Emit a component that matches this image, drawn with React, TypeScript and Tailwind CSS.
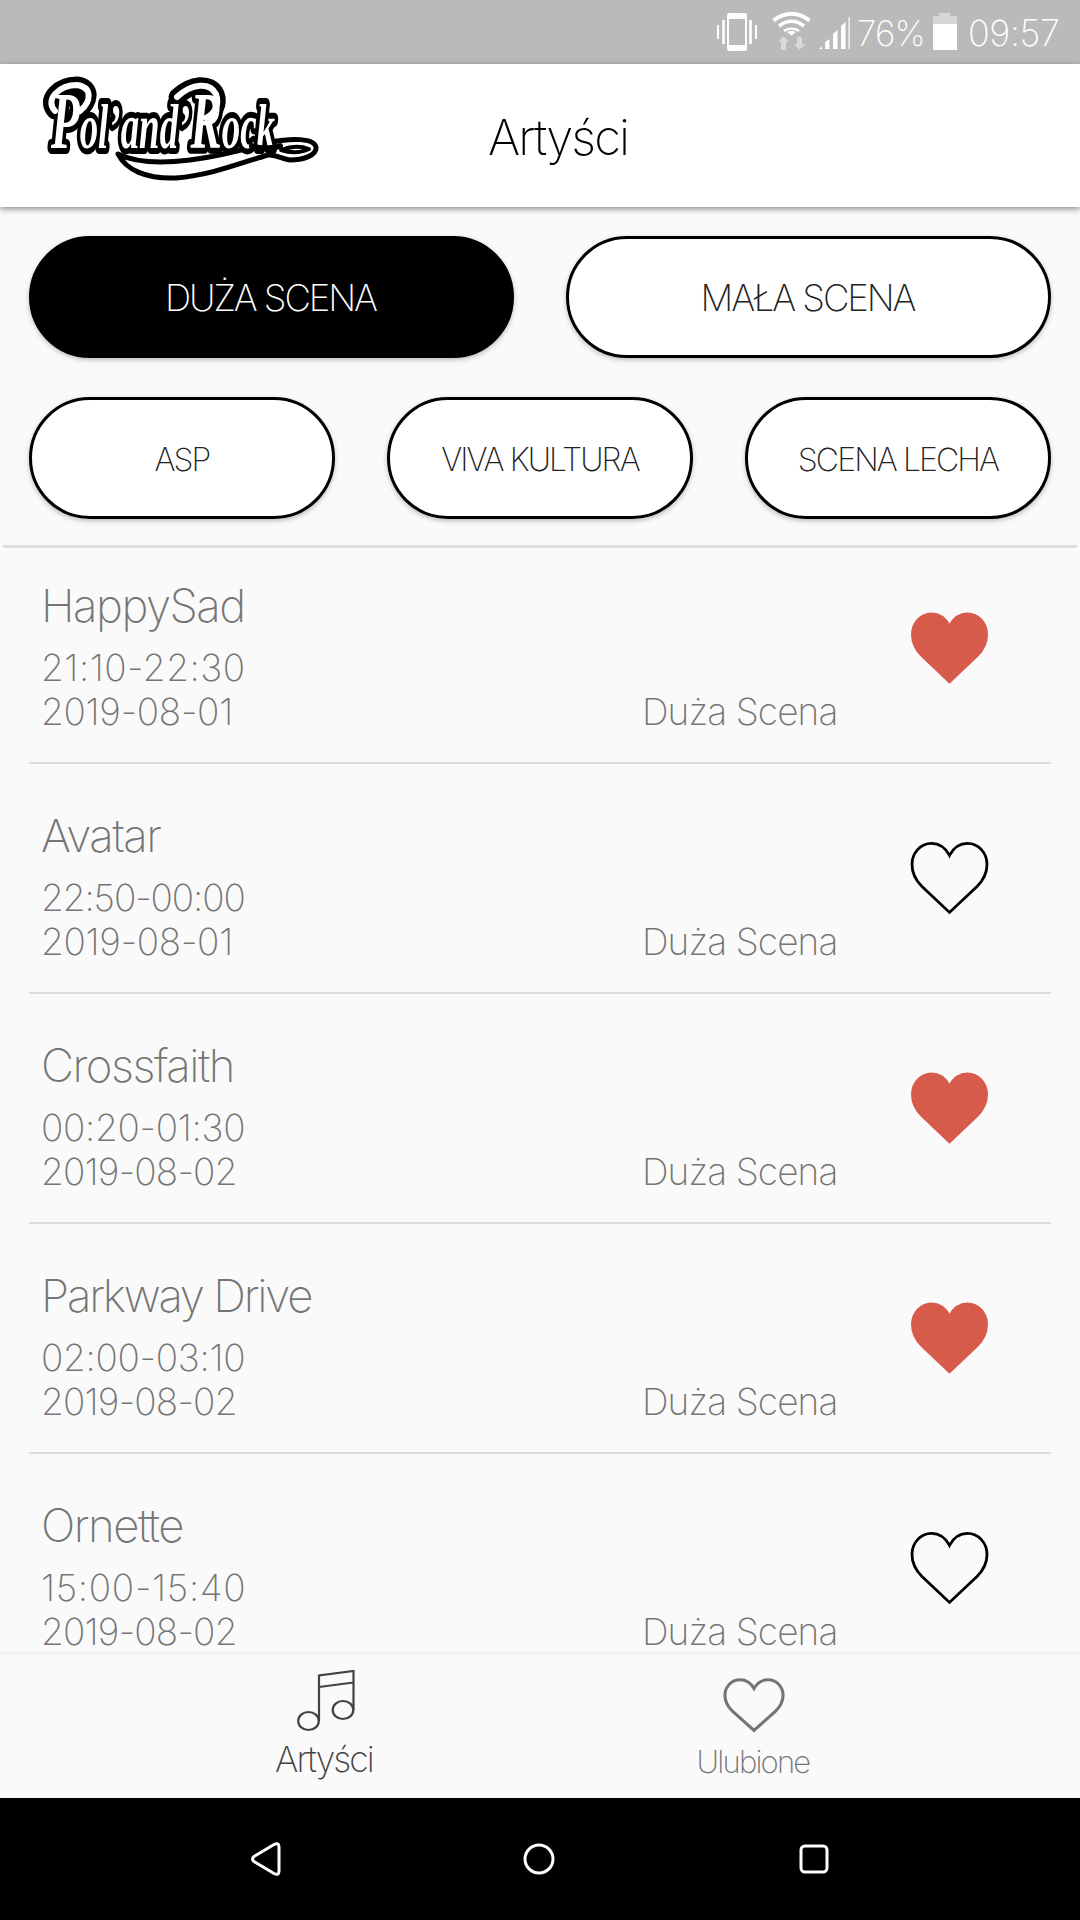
import React, { useState } from 'react';

interface Artist {
  id: number;
  name: string;
  hours: string;
  date: string;
  stage: string;
  favourite: boolean;
  // digits are proportional, so each time gets its own spacing to keep the column even
  hoursTracking: string;
  dateTracking: string;
}

const initialArtists: Artist[] = [
  { id: 1, name: 'HappySad', hours: '21:10-22:30', date: '2019-08-01', stage: 'Duża Scena', favourite: true, hoursTracking: 'tracking-[0.5px]', dateTracking: 'tracking-[-0.3px]' },
  { id: 2, name: 'Avatar', hours: '22:50-00:00', date: '2019-08-01', stage: 'Duża Scena', favourite: false, hoursTracking: 'tracking-[-1.1px]', dateTracking: 'tracking-[-0.3px]' },
  { id: 3, name: 'Crossfaith', hours: '00:20-01:30', date: '2019-08-02', stage: 'Duża Scena', favourite: true, hoursTracking: 'tracking-[-0.3px]', dateTracking: 'tracking-[-0.8px]' },
  { id: 4, name: 'Parkway Drive', hours: '02:00-03:10', date: '2019-08-02', stage: 'Duża Scena', favourite: true, hoursTracking: 'tracking-[-0.3px]', dateTracking: 'tracking-[-0.8px]' },
  { id: 5, name: 'Ornette', hours: '15:00-15:40', date: '2019-08-02', stage: 'Duża Scena', favourite: false, hoursTracking: 'tracking-[0.7px]', dateTracking: 'tracking-[-0.8px]' }
];

const HEART =
  'M38.5 13 C34.5 5.5 28.5 1 20.5 1 C9.5 1 1 10.5 1 22 C1 31.5 5 38 11 44 L38.5 70 L66 44 C72 38 76 31.5 76 22 C76 10.5 67.500 1 56.5 1 C48.5 1 42.5 5.5 38.5 13 Z';

const StatusBar: React.FC = () => (
  <div className="flex h-16 shrink-0 items-center bg-[#bababa] pl-[717px] text-white">
    <svg width="216" height="64" viewBox="717 0 216 64" className="-mr-[76px] shrink-0" fill="none">
      <g stroke="#fff">
        <path d="M718 25v14M756 25v14" strokeWidth="2" />
        <path d="M723.5 20v24M750.5 20v24" strokeWidth="2.6" />
      </g>
      <path
        fill="#fff"
        fillRule="evenodd"
        d="M730 13h14q3 0 3 3v32q0 3-3 3h-14q-3 0-3-3v-32q0-3 3-3ZM729 19v26h16v-26Z"
      />
      <path d="M773.5 20.5q18-13.500 36 0" stroke="#fff" strokeWidth="4" />
      <path d="M779 26q12.500-9.500 25 0" stroke="#fff" strokeWidth="3.5" />
      <path d="M784 31q7.500-5 15 0" stroke="#fff" strokeWidth="2.6" />
      <path d="M787 32q4.500-2 9 0l-4.500 3.500Z" fill="#fff" />
      <path fill="#d9d9d9" d="M783.500 36l5.500 6h-3v8h-5v-8h-3ZM799.500 50l-5.500-6h3v-7h5v7h3Z" />
      <path fill="#fff" d="M819 49l3-2.500v2.500ZM825 49v-7l4.500-3v10ZM833 49V34l4.500-4v19ZM841 49V26l4.500-4v27ZM848.500 49V17h1.200v32Z" />
    </svg>
    <span className="w-[76px] pt-px text-[35px] leading-[68px] font-extralight tracking-[-0.9px]">76%</span>
    <svg width="24" height="38" viewBox="0 0 24 38" className="shrink-0">
      <path d="M0 3h6V0h11v3h7v9H0Z" fill="#d6d6d6" />
      <path d="M0 11h24v26H0Z" fill="#fff" />
    </svg>
    <span className="ml-[11px] pt-px text-[36px] leading-[68px] font-extralight tracking-[-0.4px]">09:57</span>
  </div>
);

const Logo: React.FC = () => (
  <svg
    width="284"
    height="112"
    viewBox="38 72 284 112"
    className="mt-2 shrink-0 self-start"
    fill="none"
    strokeLinejoin="round"
    strokeLinecap="round"
  >
    <path
      d="M118 154C134 162 158 164 190 160C220 156 250 148 270 142C292 138 314 138 316 147C317 156 302 160 290 160C281 159 275 154 268 155C240 163 212 175 176 178C146 179 126 170 118 154Z"
      fill="#fff"
      stroke="#000"
      strokeWidth="5"
    />
    <path d="M281 150q15-6 28-1q-13 6-28 1Z" fill="#fff" stroke="#000" strokeWidth="4" />
    <g strokeWidth="17" stroke="#000">
      <path d="M55 111C44 99 60 85 77 85C92 87 92 101 76 114" />
      <path d="M177 97C192 83 210 82 216 94C220 105 214 114 204 119" />
    </g>
    <text
      x="51"
      y="148"
      textLength="224"
      lengthAdjust="spacingAndGlyphs"
      fontFamily="Liberation Serif"
      fontStyle="italic"
      fontWeight="700"
      fill="#fff"
      stroke="#000"
      strokeWidth="12"
      fontSize="63"
      style={{ paintOrder: 'stroke' }}
    >
      <tspan fontSize="80">P</tspan>ol’and’<tspan fontSize="80">R</tspan>ock
    </text>
    <g strokeWidth="6" stroke="#fff">
      <path d="M55 111C44 99 60 85 77 85C92 87 92 101 80 111" />
      <path d="M177 97C192 83 210 82 216 94C220 105 214 114 206 118" />
    </g>
    <path d="M252 146Q264 151 280 146" stroke="#000" strokeWidth="6" />
  </svg>
);

const Header: React.FC = () => (
  <header className="z-10 flex h-[143px] shrink-0 items-center bg-white pl-[38px] shadow-[0_2px_6px_rgba(0,0,0,0.45)]">
    <Logo />
    <h1 className="ml-[166px] pt-[5px] text-[49px] leading-[60px] font-extralight tracking-[-1.9px] text-black">Artyści</h1>
  </header>
);

interface StageButtonProps {
  label: string;
  active?: boolean;
  small?: boolean;
  onClick: () => void;
}

const StageButton: React.FC<StageButtonProps> = ({ label, active, small, onClick }) => (
  <button
    type="button"
    onClick={onClick}
    className={`flex h-[122px] flex-1 items-center justify-center rounded-full border-3 border-black pt-[3px] font-extralight whitespace-nowrap shadow-[0_2px_5px_rgba(0,0,0,0.25)] ${
      active ? 'bg-black text-white' : 'bg-white text-[#222]'
    } ${small ? 'text-[32px] tracking-[-1.9px]' : 'pr-[2px] text-[36.5px] tracking-[-2.1px]'}`}
  >
    {label}
  </button>
);

interface ArtistRowProps {
  artist: Artist;
  onToggle: (id: number) => void;
}

const ArtistRow: React.FC<ArtistRowProps> = ({ artist, onToggle }) => (
  <li className="mx-[29px] flex h-[230px] shrink-0 items-end border-b-2 border-[#dcdcdc] pr-[63px] pb-[28px] pl-[12px] text-[#757575] first:h-[216px]">
    <div className="flex-1">
      <h2
        className={`mb-[10px] text-[45.5px] leading-[60px] font-extralight ${
          artist.name.length > 10 ? 'tracking-[-2.2px]' : 'tracking-[-1.5px]'
        }`}
      >
        {artist.name}
      </h2>
      <p className={`text-[37px] leading-[44px] font-extralight ${artist.hoursTracking}`}>{artist.hours}</p>
      <p className={`text-[37px] leading-[44px] font-extralight ${artist.dateTracking}`}>{artist.date}</p>
    </div>
    <p className="w-[269px] text-[37px] leading-[44px] font-extralight tracking-[-0.9px]">{artist.stage}</p>
    <button type="button" className="mb-[50px]" onClick={() => onToggle(artist.id)}>
      <svg width="77" height="72" viewBox="0 -0.4 77 72" overflow="visible">
        <path
          d={HEART}
          fill={artist.favourite ? '#d75b4b' : 'none'}
          stroke={artist.favourite ? '#d75b4b' : '#000'}
          strokeWidth={artist.favourite ? 2 : 2.8}
        />
      </svg>
    </button>
  </li>
);

const TabBar: React.FC = () => (
  <nav className="flex h-[147px] shrink-0 border-t-4 border-[#f2f2f2] bg-[#fafafa]">
    <button type="button" className="ml-[224px] flex w-[200px] flex-col items-center pt-[14px] text-[#424242]">
      <svg width="58" height="64" viewBox="0 0 58 64" fill="none" stroke="currentColor" strokeWidth="2.2" className="ml-[3px]">
        <ellipse cx="11.500" cy="52" rx="10.300" ry="9" />
        <ellipse cx="46" cy="41" rx="10.300" ry="9" />
        <path d="M22 52V6.500L56.500 2V41M22 18L56.500 13.500" />
      </svg>
      <span className="mt-[7px] text-[35.5px] leading-[40px] font-extralight tracking-[-1.9px]">Artyści</span>
    </button>
    <button type="button" className="ml-[229px] flex w-[200px] flex-col items-center pt-[23px] text-[#757575]">
      <svg
        width="62"
        height="55"
        viewBox="-1.5 -1.5 80 75"
        preserveAspectRatio="none"
        fill="none"
        stroke="currentColor"
        strokeWidth="4"
        className="ml-[2px]"
      >
        <path d={HEART} />
      </svg>
      <span className="mt-[9px] text-[31px] leading-[40px] font-extralight tracking-[-1.8px]">Ulubione</span>
    </button>
  </nav>
);

const SystemNav: React.FC = () => (
  <div className="flex h-[122px] shrink-0 items-center bg-black pl-[249px]">
    <svg width="34" height="36" viewBox="0 0 34 36" fill="none" stroke="#fff" strokeWidth="3" strokeLinejoin="round">
      <path d="M25 3.500Q30 1 30 6V30Q30 35 25 32.500L5 20.500Q2 18 5 15.500Z" />
    </svg>
    <svg width="34" height="34" viewBox="0 0 34 34" fill="none" stroke="#fff" strokeWidth="3" className="ml-[239px]">
      <circle cx="17" cy="17" r="14" />
    </svg>
    <svg width="32" height="32" viewBox="0 0 32 32" fill="none" stroke="#fff" strokeWidth="3" className="ml-[242px]">
      <rect x="3" y="3" width="26" height="26" rx="4" />
    </svg>
  </div>
);

const App: React.FC = () => {
  const [artists, setArtists] = useState(initialArtists);
  const [stage, setStage] = useState('DUŻA SCENA');

  const toggleFavourite = (id: number) => {
    setArtists(prev => prev.map(a => (a.id === id ? { ...a, favourite: !a.favourite } : a)));
  };

  return (
    <div className="flex h-[1920px] w-[1080px] flex-col overflow-hidden bg-[#fafafa] font-['Inter',sans-serif]">
      <StatusBar />
      <Header />
      <section className="mx-[3px] flex h-[341px] shrink-0 flex-col gap-[39px] border-b-3 border-[#dddddd] px-[26px] pt-[29px]">
        <div className="flex gap-[52px]">
          {['DUŻA SCENA', 'MAŁA SCENA'].map(label => (
            <StageButton key={label} label={label} active={stage === label} onClick={() => setStage(label)} />
          ))}
        </div>
        <div className="flex gap-[52px]">
          {['ASP', 'VIVA KULTURA', 'SCENA LECHA'].map(label => (
            <StageButton key={label} label={label} small active={stage === label} onClick={() => setStage(label)} />
          ))}
        </div>
      </section>
      <ul className="flex min-h-0 flex-1 flex-col overflow-hidden">
        {artists.map(artist => (
          <ArtistRow key={artist.id} artist={artist} onToggle={toggleFavourite} />
        ))}
      </ul>
      <TabBar />
      <SystemNav />
    </div>
  );
};

export default App;
